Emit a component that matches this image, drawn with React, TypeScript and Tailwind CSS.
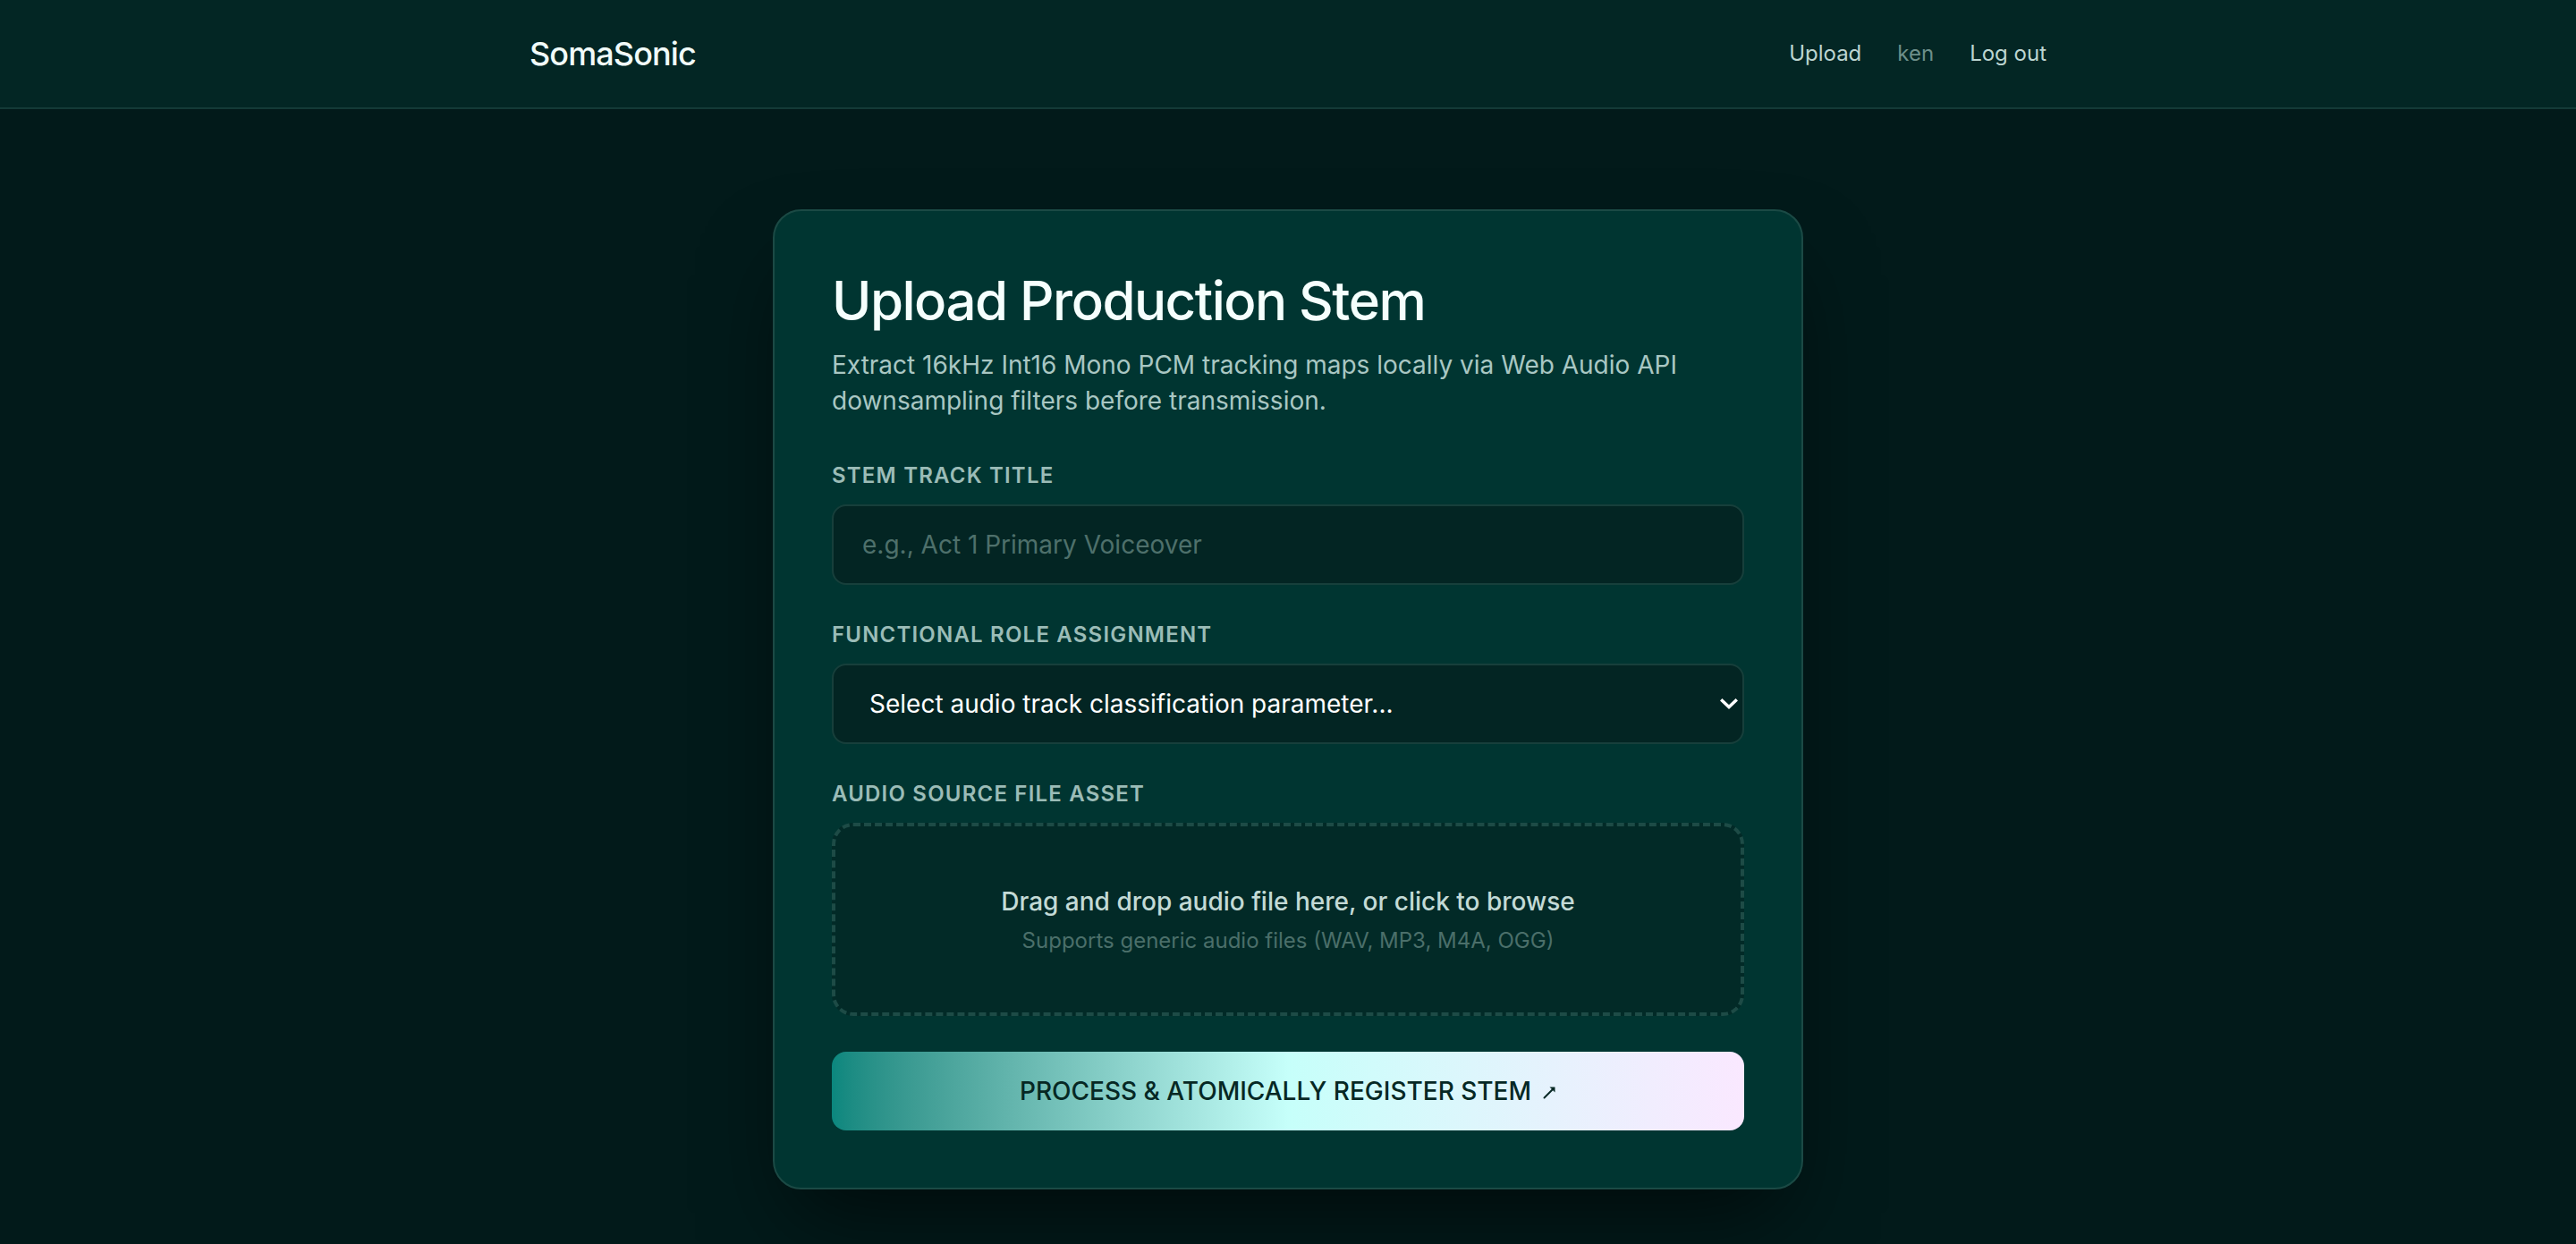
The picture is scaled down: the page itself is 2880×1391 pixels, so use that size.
import { useState } from 'react';

const roles = [
  'Dialogue',
  'Music Bed',
  'Sound Effects',
  'Ambience',
  'Foley',
];

export default function App() {
  const [title, setTitle] = useState('');
  const [role, setRole] = useState('');

  return (
    <div className="min-h-screen bg-[#021a1a] font-[Inter,sans-serif] text-white">
      {/* Header */}
      <header className="border-b-2 border-[#143a37] bg-[#032624]">
        <div className="mx-auto flex h-[120px] max-w-[1792px] items-center justify-between px-12">
          <a href="#" className="text-[36px] font-medium tracking-tight text-[#f1fbf9]">
            SomaSonic
          </a>
          <nav className="flex items-center gap-10 text-[24px]">
            <a href="#" className="text-[#bcd5d1] hover:text-white">
              Upload
            </a>
            <span className="text-[#6d8f8a]">ken</span>
            <button className="text-[#bcd5d1] hover:text-white">Log out</button>
          </nav>
        </div>
      </header>

      {/* Upload card */}
      <main className="px-12 py-[112px]">
        <div className="mx-auto max-w-[1152px] rounded-[32px] border-2 border-[#1b4a45] bg-[#003531] p-16 shadow-[0_50px_100px_-24px_rgba(0,0,0,0.6)]">
          <h1 className="text-[60px] font-medium leading-[72px] tracking-tight text-[#f5fffd]">
            Upload Production Stem
          </h1>
          <p className="mt-4 text-[28px] leading-[40px] text-[#a9c7c3]">
            Extract 16kHz Int16 Mono PCM tracking maps locally via Web Audio API downsampling filters
            before transmission.
          </p>

          <form className="mt-12 flex flex-col gap-10" onSubmit={(e) => e.preventDefault()}>
            <div>
              <label className="mb-4 block text-[24px] font-semibold uppercase leading-[32px] tracking-wider text-[#9bbcb7]">
                Stem Track Title
              </label>
              <input
                value={title}
                onChange={(e) => setTitle(e.target.value)}
                placeholder="e.g., Act 1 Primary Voiceover"
                className="h-[90px] w-full rounded-2xl border-2 border-[#173f3b] bg-[#032523] px-8 text-[28px] text-white outline-none placeholder:text-[#4e706b] focus:border-[#2b6a63]"
              />
            </div>

            <div>
              <label className="mb-4 block text-[24px] font-semibold uppercase leading-[32px] tracking-wider text-[#9bbcb7]">
                Functional Role Assignment
              </label>
              <div className="relative">
                <select
                  value={role}
                  onChange={(e) => setRole(e.target.value)}
                  className="h-[90px] w-full appearance-none rounded-2xl border-2 border-[#173f3b] bg-[#032523] pl-[40px] pr-16 text-[28px] text-white outline-none focus:border-[#2b6a63]"
                >
                  <option value="">Select audio track classification parameter...</option>
                  {roles.map((r) => (
                    <option key={r} value={r}>
                      {r}
                    </option>
                  ))}
                </select>
                <svg
                  className="pointer-events-none absolute right-[7px] top-1/2 -translate-y-1/2"
                  width="20"
                  height="12"
                  viewBox="0 0 20 12"
                  fill="none"
                >
                  <path d="M2.5 2.5 10 9.5 17.5 2.5" stroke="#ffffff" strokeWidth="3.5" strokeLinecap="square" />
                </svg>
              </div>
            </div>

            <div>
              <label className="mb-4 block text-[24px] font-semibold uppercase leading-[32px] tracking-wider text-[#9bbcb7]">
                Audio Source File Asset
              </label>
              <div className="cursor-pointer rounded-3xl border-4 border-dashed border-[#1d4b46] bg-[#022a27] py-16 text-center">
                <p className="text-[28px] font-medium leading-[40px] text-[#c3dad6]">
                  Drag and drop audio file here, or click to browse
                </p>
                <p className="mt-2 text-[24px] leading-[32px] text-[#4b6f6a]">
                  Supports generic audio files (WAV, MP3, M4A, OGG)
                </p>
              </div>
            </div>

            <button
              type="submit"
              className="flex h-[88px] w-full items-center justify-center gap-[13px] rounded-2xl bg-linear-to-r from-[#0a877e] via-[#c6fffa] to-[#fae8ff] text-[28px] font-medium uppercase text-[#062824]"
            >
              <span>Process &amp; Atomically Register Stem</span>
              <svg className="mt-[2px]" width="15" height="15" viewBox="0 0 15 15" fill="none">
                <path d="M1.5 13.5 12 3" stroke="#062824" strokeWidth="2" strokeLinecap="round" />
                <path d="M7.5 1.5h6v6z" fill="#062824" />
              </svg>
            </button>
          </form>
        </div>
      </main>
    </div>
  );
}
